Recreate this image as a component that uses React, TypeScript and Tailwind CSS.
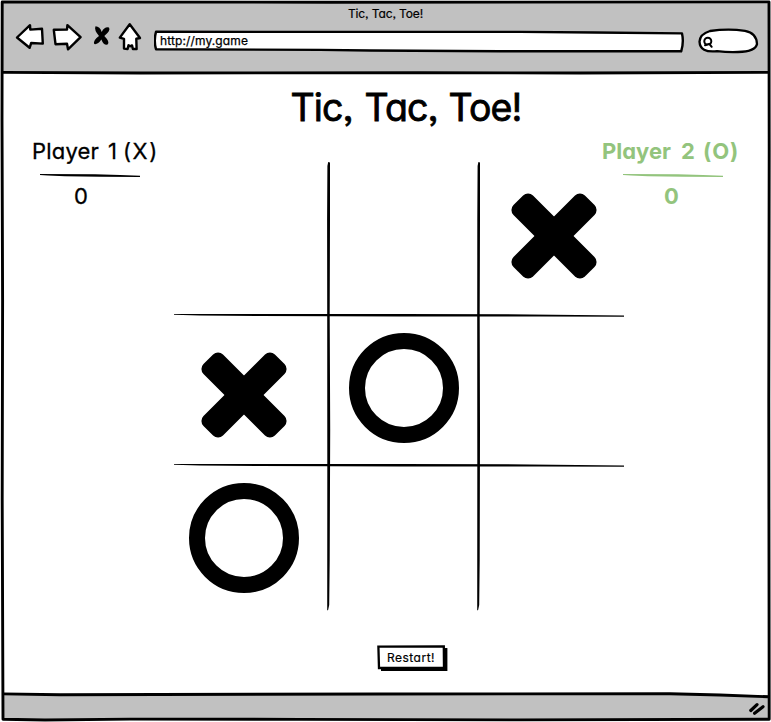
import React from "react";

type Mark = "X" | "O" | null;

const board: { mark: Mark; place: string }[] = [
  { mark: null, place: "" },
  { mark: null, place: "" },
  { mark: "X", place: "pt-[31px] pl-[32px]" },
  { mark: "X", place: "pt-[37px] pl-[27px]" },
  { mark: "O", place: "pt-[18px] pl-[20px]" },
  { mark: null, place: "" },
  { mark: "O", place: "pt-[18px] pl-[15px]" },
  { mark: null, place: "" },
  { mark: null, place: "" },
];

function Cross() {
  return (
    <svg width="86" height="86" viewBox="-43 -43 86 86">
      <rect x="-50.5" y="-13.8" width="101" height="27.6" rx="7" transform="rotate(45)" />
      <rect x="-50.5" y="-13.8" width="101" height="27.6" rx="7" transform="rotate(-45)" />
    </svg>
  );
}

function Nought() {
  return <div className="h-[110px] w-[110px] rounded-full border-[16px] border-black" />;
}

function BoardLines() {
  return (
    <svg className="absolute inset-0" width="450" height="449" viewBox="174 162 450 449">
      <path d="M327.4 166 L328.2 162 L330 162.5 L330 220 L329.7 315 L330.2 430 L329.7 560 L329.2 605 L328 610.5 L327.2 610 L327.3 465 L327.2 315 L327.1 220Z" />
      <path d="M477.6 166 L478.4 162 L480 162.5 L480 220 L479.7 315 L480 430 L479.7 560 L479.2 605 L478 610.5 L477.2 610 L477.3 465 L477.2 315 L477.3 220Z" />
      <path d="M174 314 L235 314 L400 314 L530 314.4 L624 315.5 L624 316.8 L540 316.6 L400 316.4 L260 316 L200 315.6 L174 314.8Z" />
      <path d="M174 464 L235 464 L400 464 L530 464.4 L624 465.5 L624 466.8 L540 466.6 L400 466.4 L260 466 L200 465.6 L174 464.8Z" />
    </svg>
  );
}

function Underline() {
  return (
    <svg width="100" height="4" viewBox="0 0 100 4">
      <path fill="currentColor" d="M0 .1 L55 .2 L80 1 L100 1.7 V2.9 L60 2.7 L25 2.2 L8 1.6 L0 .9Z" />
    </svg>
  );
}

function NavIcons() {
  return (
    <svg
      width="130" height="30" viewBox="14 22 130 30"
      fill="white" stroke="black" strokeWidth="2.4" strokeLinejoin="round" strokeLinecap="round"
    >
      <path d="M17 37.5 L30 25.2 L30.3 29.6 L42 28.8 L42.8 43.6 L31.2 43 L29.6 47.8Z" />
      <path d="M53.8 29.8 L67 29.6 L67.4 25.2 L80.6 37.2 L68 49.3 L67 43.8 L55.5 44.2Z" />
      <path fill="black" stroke="none" d="M95.5 26.3 Q100 26.4 101.7 32 Q104.4 26.5 109 27.5 Q111 30.5 104.3 36 Q110.3 42 107.6 44.6 Q103.5 45.5 101.4 39.5 Q97.5 45 94.2 44 Q92.7 40.5 99 36 Q93.8 30 95.5 26.3Z" />
      <path d="M129.7 24.2 L140 38 L136.3 38.7 L136.6 49 L132.9 49 L132 45.4 L130.3 46.3 L128.5 45.2 L127.6 49.1 L124 48.6 L124 38.8 L119.8 37.6Z" />
    </svg>
  );
}

function AddressBar() {
  return (
    <div className="relative ml-[10px] flex h-[23px] w-[531px] items-center pl-[6px]">
      <svg
        className="absolute inset-0" width="531" height="23" viewBox="154 30 531 23"
        fill="white" stroke="black" strokeWidth="2.4" strokeLinejoin="round"
      >
        <path d="M156 31.8 L520 31.9 L595 32.5 L682 33.4 Q684 42 681.2 51.3 L500 51.2 L370 50.5 L320 49.9 L156 49.2 Q153.6 41 156 31.8Z" />
      </svg>
      <span className="relative text-[12px] leading-none tracking-[0.12px] [-webkit-text-stroke:0.25px_black]">
        http://my.game
      </span>
    </div>
  );
}

function SearchBox() {
  return (
    <svg
      className="ml-[13px]" width="61" height="26" viewBox="698 28 61 26"
      fill="white" stroke="black" strokeWidth="2.3" strokeLinecap="round"
    >
      <path d="M710 31 Q728 28.4 745 30.8 Q756.6 33 757 44 Q755.6 51.6 738 52 Q728 52.4 717 51.2 Q700 53 699.5 41.6 Q700 34 710 31Z" />
      <circle cx="707.8" cy="41.2" r="3.5" strokeWidth="2" />
      <path d="M705 45.2 L709.4 44 L711.7 46.8" strokeWidth="2" />
    </svg>
  );
}

function FrameLines() {
  return (
    <svg
      className="pointer-events-none absolute inset-0" width="771" height="722" viewBox="0 0 771 722"
      fill="none" stroke="black" strokeWidth="2.9" strokeLinejoin="round"
    >
      <path d="M2.2 1.9 L330 2.2 L769 1.9 L769.2 150 L768.8 400 L769.2 719.3 L520 719.9 L300 719.4 L130 719.1 L45 720 L3 719.2 L2.2 500 L2.6 300 L2 120Z" />
      <path d="M3 72.4 L140 73 L420 72.7 L580 73 L768 72.4" />
      <path d="M3 693.9 L60 694.7 L380 694 L670 693.7 L720 695 L768 696.8" />
    </svg>
  );
}

export default function App() {
  return (
    <div className="relative flex h-[722px] w-[771px] flex-col overflow-hidden bg-white font-['Inter','Liberation_Sans',sans-serif] text-black [font-feature-settings:'cv11','ss03']">
      <header className="mx-[2px] mt-[2px] h-[71px] bg-[#c1c1c1]">
        <div className="flex h-[20px] items-center justify-center pt-[3px] text-[12px] leading-none tracking-[-0.1px] [-webkit-text-stroke:0.2px_black]">
          Tic, Tac, Toe!
        </div>
        <div className="flex h-[34px] items-start pl-[12px]">
          <NavIcons />
          <div className="mt-[6px] flex items-center">
            <AddressBar />
            <SearchBox />
          </div>
        </div>
      </header>

      <main className="flex h-[622px] flex-col items-center">
        <h1 className="mt-[14px] ml-[40px] flex h-[42px] w-[230px] text-[37.5px] leading-[42px] tracking-[-0.9px] whitespace-nowrap [-webkit-text-stroke:0.8px_black]">
          <span className="w-[74px] shrink-0">Tic, </span>
          <span className="w-[84px] shrink-0">Tac, </span>
          <span>Toe!</span>
        </h1>
        <div className="flex w-full items-start">
          <section className="mt-[9px] flex w-[174px] shrink-0 flex-col pl-[32px]">
            <h2 className="flex h-[26px] text-[22px] leading-[26px] whitespace-nowrap [-webkit-text-stroke:0.3px_black]">
              <span className="w-[76px] shrink-0 tracking-[0.2px]">Player </span>
              <span className="w-[15px] shrink-0">1 </span>
              <span className="tracking-[1.6px]">(X)</span>
            </h2>
            <div className="mt-[10px] ml-[8px] h-[4px]">
              <Underline />
            </div>
            <p className="mt-[5px] ml-[42px] text-[22px] leading-[26px] [-webkit-text-stroke:0.3px_black]">0</p>
          </section>
          <section className="relative mt-[33px] grid h-[449px] w-[450px] shrink-0 grid-cols-[155px_150px_145px] grid-rows-[153px_150px_146px]">
            <BoardLines />
            {board.map((cell, i) => (
              <div key={i} className={cell.place}>
                {cell.mark === "X" && <Cross />}
                {cell.mark === "O" && <Nought />}
              </div>
            ))}
          </section>
          <section className="mt-[9px] -ml-[22px] flex w-[169px] shrink-0 flex-col font-bold text-[#93c47d]">
            <h2 className="flex h-[26px] text-[22px] leading-[26px] whitespace-nowrap">
              <span className="w-[79px] shrink-0">Player </span>
              <span className="w-[22px] shrink-0">2 </span>
              <span className="tracking-[0.9px]">(O)</span>
            </h2>
            <div className="mt-[10px] ml-[21px] h-[4px]">
              <Underline />
            </div>
            <p className="mt-[5px] ml-[62px] text-[22px] leading-[26px]">0</p>
          </section>
        </div>
        <button className="relative mt-[34px] ml-[54px] h-[26px] w-[71px] text-[12px] leading-none tracking-[0.5px] [-webkit-text-stroke:0.2px_black]">
          <svg className="absolute inset-0" width="71" height="26" viewBox="377 645 71 26">
            <path d="M381 649 L447.4 648 L447.4 671 L410 671 L381 671Z" />
            <path d="M378.4 646.6 L443.8 646.4 L444 667.6 L379 668Z" fill="white" stroke="black" strokeWidth="2.3" />
          </svg>
          <span className="relative -left-[1.5px]">Restart!</span>
        </button>
      </main>

      <footer className="mx-[2px] flex h-[25px] items-center justify-end bg-[#c1c1c1] pr-[3px]">
        <svg
          width="18" height="14" viewBox="748 701 18 14"
          stroke="black" strokeWidth="3.2" strokeLinecap="round"
        >
          <path d="M750.8 710.5 L757 704.6 M754.6 713.2 L763 706.8" />
        </svg>
      </footer>
      <FrameLines />
    </div>
  );
}
